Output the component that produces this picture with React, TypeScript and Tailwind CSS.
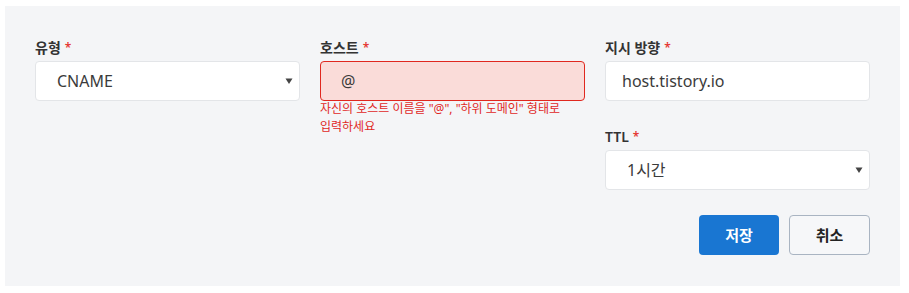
import React from "react";

const font = { fontFamily: '"Noto Sans", "Noto Sans CJK KR", sans-serif' };

function Label({ text }: { text: string }) {
  return (
    <div className="mb-[4px] flex h-[18px] items-center text-[14px] font-semibold leading-[18px] text-[#333]">
      {text}
      <span className="ml-[4px] text-[12px] text-[#e53935]">*</span>
    </div>
  );
}

function Select({ value }: { value: string }) {
  return (
    <div className="flex h-[40px] items-center justify-between rounded-[4px] border border-[#e3e5e8] bg-white pl-[21px] pr-[6px] text-[16px] text-[#3b3b3b]">
      <span>{value}</span>
      <svg width="8" height="8" viewBox="0 0 8 8"><path d="M0.5 1.5h7L4 7z" fill="#444" /></svg>
    </div>
  );
}

export default function App() {
  return (
    <div className="bg-white pl-[5px] pr-[9px] pt-[6px] pb-[7px]" style={font}>
      <div className="grid h-[280px] grid-cols-3 gap-x-[20px] bg-[#f4f5f7] px-[30px] pt-[30px]">
        <div className="pt-[3px]">
          <Label text="유형" />
          <Select value="CNAME" />
        </div>
        <div className="pt-[3px]">
          <Label text="호스트" />
          <div className="flex h-[40px] items-center rounded-[4px] border border-[#e0281f] bg-[#fadcd9] pl-[20px] text-[16px] text-[#3b3b3b]">
            @
          </div>
          <p className="mt-[-1px] break-keep text-[12px] leading-[18px] text-[#e0281f]">
            자신의 호스트 이름을 "@", "하위 도메인" 형태로 입력하세요
          </p>
        </div>
        <div className="pt-[3px]">
          <Label text="지시 방향" />
          <div className="flex h-[40px] items-center rounded-[4px] border border-[#e3e5e8] bg-white pl-[16px] text-[16px] text-[#3b3b3b]">
            host.tistory.io
          </div>
          <div className="mt-[27px]">
            <Label text="TTL" />
            <Select value="1시간" />
          </div>
          <div className="mt-[25px] flex justify-end gap-[10px]">
            <button className="h-[40px] w-[80px] rounded-[4px] bg-[#1976d2] text-[15px] font-bold text-white">저장</button>
            <button className="h-[40px] w-[81px] rounded-[4px] border border-[#a9b4c2] bg-[#f6f7f9] text-[15px] font-bold text-[#222]">취소</button>
          </div>
        </div>
      </div>
    </div>
  );
}
